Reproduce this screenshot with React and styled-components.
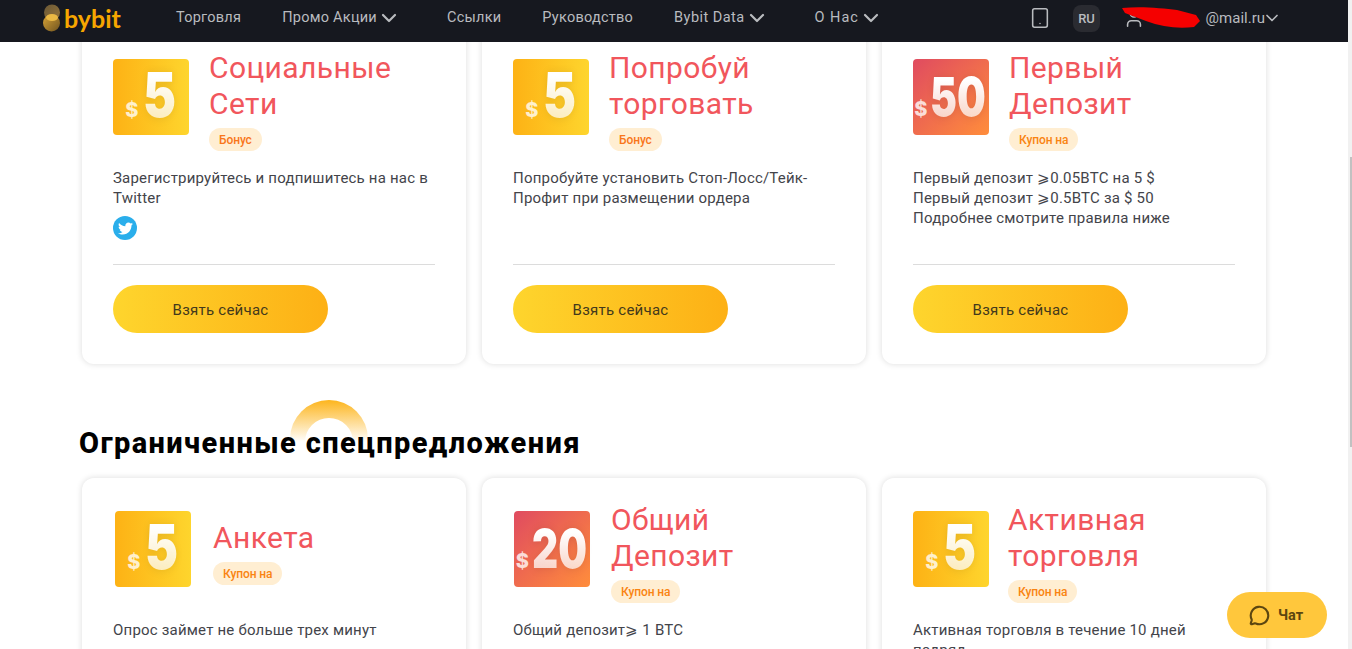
import React from 'react';
import styled, { createGlobalStyle } from 'styled-components';
import { ChevronDown, MessageCircle, Tablet, User } from 'lucide-react';
import { FaTwitter } from 'react-icons/fa';

const YELLOW = 'linear-gradient(90deg, #fdb215 0%, #fed52d 100%)';
const RED = 'linear-gradient(135deg, #e04b60 0%, #ff8d3b 100%)';

const NAV = [
  { label: 'Торговля' },
  { label: 'Промо Акции', menu: true },
  { label: 'Ссылки' },
  { label: 'Руководство' },
  { label: 'Bybit Data', menu: true, track: 0.45 },
  { label: 'О Нас', menu: true, track: 1 },
];

const TOP_CARDS = [
  {
    title: ['Социальные', 'Сети'],
    tag: 'Бонус',
    amount: '5',
    lines: ['Зарегистрируйтесь и подпишитесь на нас в Twitter'],
    twitter: true,
  },
  {
    title: ['Попробуй', 'торговать'],
    tag: 'Бонус',
    amount: '5',
    lines: ['Попробуйте установить Стоп-Лосс/Тейк-Профит при размещении ордера'],
  },
  {
    title: ['Первый', 'Депозит'],
    tag: 'Купон на',
    amount: '50',
    lines: ['Первый депозит ⩾0.05BTC на 5 $', 'Первый депозит ⩾0.5BTC за $ 50', 'Подробнее смотрите правила ниже'],
  },
];

const LIMITED_CARDS = [
  {
    title: ['Анкета'],
    tag: 'Купон на',
    amount: '5',
    shift: 2,
    gap: 22,
    lines: ['Опрос займет не больше трех минут'],
  },
  {
    title: ['Общий', 'Депозит'],
    tag: 'Купон на',
    amount: '20',
    shift: 1,
    gap: 21,
    lines: ['Общий депозит⩾ 1 BTC'],
  },
  {
    title: ['Активная', 'торговля'],
    tag: 'Купон на',
    amount: '5',
    gap: 19,
    lines: ['Активная торговля в течение 10 дней подряд'],
  },
];

function Coupon({ amount }) {
  const wide = amount.length > 1;
  return (
    <CouponIcon $wide={wide}>
      <Dollar>$</Dollar>
      <Amount $wide={wide}>{amount}</Amount>
    </CouponIcon>
  );
}

function RewardCard({ title, tag, amount, lines, twitter, shift = 0, gap = 20 }) {
  return (
    <Card>
      <CardHead $shift={shift} $gap={gap}>
        <Coupon amount={amount} />
        <HeadText>
          <CardTitle>
            {title.map((line) => (
              <div key={line}>{line}</div>
            ))}
          </CardTitle>
          <Tag $strong={tag !== 'Бонус'}>{tag}</Tag>
        </HeadText>
      </CardHead>
      <Description>
        {lines.map((line) => (
          <div key={line}>{line}</div>
        ))}
        {twitter && (
          <TwitterBadge>
            <FaTwitter size={15} color="#fff" />
          </TwitterBadge>
        )}
      </Description>
      <Divider />
      <ClaimButton>Взять сейчас</ClaimButton>
    </Card>
  );
}

export default function App() {
  return (
    <>
      <GlobalStyle />
      <Page>
        <Column>
          <TopBar>
            <Logo>
              <svg width="18" height="28" viewBox="0 0 18 28">
                <defs>
                  <linearGradient id="coinTop" x1="0" y1="0" x2="1" y2="1">
                    <stop offset="0" stopColor="#6b5836" />
                    <stop offset="1" stopColor="#94743a" />
                  </linearGradient>
                  <linearGradient id="coinBottom" x1="0" y1="0" x2="1" y2="1">
                    <stop offset="0" stopColor="#d9a436" />
                    <stop offset="1" stopColor="#6f5320" />
                  </linearGradient>
                </defs>
                <circle cx="9" cy="8.5" r="8" fill="url(#coinTop)" />
                <circle cx="8.5" cy="19" r="8.5" fill="url(#coinBottom)" />
                <ellipse cx="9" cy="13.5" rx="6" ry="3.5" fill="#e9b844" />
              </svg>
              <LogoWord>bybit</LogoWord>
            </Logo>
            <Nav>
              {NAV.map((item) => (
                <NavItem key={item.label} $menu={item.menu} $track={item.track ?? 0.25}>
                  {item.label}
                  {item.menu && <ChevronDown size={24} strokeWidth={2.2} />}
                </NavItem>
              ))}
            </Nav>
            <Tools>
              <Tablet size={22} strokeWidth={1.7} />
              <Lang>RU</Lang>
              <Account>
                <User size={22} strokeWidth={1.7} />
                <Email>@mail.ru</Email>
                <AccountChevron size={20} strokeWidth={2} />
                <Scribble width="80" height="22" viewBox="0 0 80 22">
                  <path
                    d="M0 1 C18 -1 40 1 55 3 L74 8 L78 14 L72 20 C56 22 40 20 24 14 L3 6 Z"
                    fill="#f50000"
                  />
                </Scribble>
              </Account>
            </Tools>
          </TopBar>
          <Content>
            <CardGrid>
              {TOP_CARDS.map((card) => (
                <RewardCard key={card.title[0]} {...card} />
              ))}
            </CardGrid>
            <SectionHeader>
              <Arc />
              <SectionTitle>Ограниченные спецпредложения</SectionTitle>
            </SectionHeader>
            <CardGrid>
              {LIMITED_CARDS.map((card) => (
                <RewardCard key={card.title[0]} {...card} />
              ))}
            </CardGrid>
          </Content>
        </Column>
        <ScrollTrack>
          <ScrollThumb />
        </ScrollTrack>
        <ChatButton>
          <MessageCircle size={21} strokeWidth={2.4} />
          Чат
        </ChatButton>
      </Page>
    </>
  );
}

const GlobalStyle = createGlobalStyle`
  html, body {
    margin: 0;
    height: 100%;
    overflow: hidden;
    background: #fff;
    font-family: Roboto, "Noto Sans", sans-serif;
  }
`;

const Page = styled.div`
  display: flex;
  height: 649px;
  overflow: hidden;
`;

const Column = styled.div`
  position: relative;
  width: 1348px;
  flex: none;
`;

const ScrollTrack = styled.div`
  flex: 1;
  display: flex;
  justify-content: flex-end;
  padding-top: 157px;
  background: #f1f1f1;
`;

const ScrollThumb = styled.div`
  width: 2px;
  height: 290px;
  background: #c1c1c1;
`;

const TopBar = styled.header`
  position: absolute;
  inset: 0 0 auto 0;
  z-index: 5;
  height: 42px;
  box-sizing: border-box;
  display: flex;
  align-items: center;
  padding: 0 70px 6px 43px;
  background: #16181f;
  color: #b9bbbf;
`;

const Logo = styled.div`
  display: flex;
  align-items: center;
  gap: 3px;
  width: 133px;
  flex: none;
`;

const LogoWord = styled.span`
  font-family: Lato, Roboto, sans-serif;
  font-size: 25px;
  font-weight: 700;
  line-height: 30px;
  color: #f7a600;
`;

const Nav = styled.nav`
  display: flex;
  align-items: center;
  gap: 41px;
`;

const NavItem = styled.a`
  display: flex;
  align-items: center;
  gap: 5px;
  font-size: 14.5px;
  line-height: 20px;
  letter-spacing: ${(p) => p.$track}px;
  padding-right: ${(p) => (p.$menu ? '10px' : '0')};

  svg {
    margin: -2px -5px;
  }
`;

const Tools = styled.div`
  display: flex;
  align-items: center;
  margin-left: auto;
`;

const Lang = styled.div`
  width: 27px;
  height: 27px;
  margin: 0 23px 0 22px;
  border-radius: 8px;
  background: #2a2b31;
  display: flex;
  align-items: center;
  justify-content: center;
  font-size: 13px;
  font-weight: 500;
`;

const Account = styled.div`
  position: relative;
  display: flex;
  align-items: center;
  width: 155px;
`;

const Email = styled.span`
  margin-left: auto;
  font-size: 15px;
  line-height: 20px;
`;

const AccountChevron = styled(ChevronDown)`
  margin: 0 -4px 0 -3px;
`;

const Scribble = styled.svg`
  position: absolute;
  left: -1px;
  top: 0;
`;

const Content = styled.main`
  padding: 26px 0 0 82px;
`;

const CardGrid = styled.div`
  display: grid;
  grid-template-columns: repeat(3, 384px);
  gap: 16px;
`;

const Card = styled.article`
  box-sizing: border-box;
  height: 338px;
  padding: 24px 31px 31px;
  background: #fff;
  border-radius: 12px;
  box-shadow: 0 0 6px rgba(0, 0, 0, 0.14);
`;

const CardHead = styled.div`
  display: flex;
  align-items: center;
  min-height: 101px;
  margin-left: ${(p) => p.$shift}px;
  gap: ${(p) => p.$gap}px;
`;

const CouponIcon = styled.div`
  flex: none;
  box-sizing: border-box;
  width: 76px;
  height: 76px;
  margin-bottom: 7px;
  display: flex;
  align-items: baseline;
  justify-content: center;
  gap: ${(p) => (p.$wide ? '3px' : '5px')};
  padding-top: ${(p) => (p.$wide ? '11px' : '5px')};
  border-radius: 4px;
  background: ${(p) => (p.$wide ? RED : YELLOW)};
`;

const Dollar = styled.span`
  font-family: Inter, Roboto, sans-serif;
  font-size: 20px;
  font-weight: 800;
  line-height: 1;
  color: rgba(255, 255, 255, 0.78);
`;

const Amount = styled.span`
  display: inline-block;
  font-family: Inter, Roboto, sans-serif;
  font-size: ${(p) => (p.$wide ? '54px' : '62px')};
  font-weight: 900;
  line-height: 1;
  transform: scaleX(${(p) => (p.$wide ? 0.75 : 0.8)});
  transform-origin: left center;
  margin-right: ${(p) => (p.$wide ? '-17px' : '-8px')};
  background: linear-gradient(180deg, #fff 20%, rgba(255, 255, 255, 0.72) 85%);
  -webkit-background-clip: text;
  background-clip: text;
  color: transparent;
  filter: drop-shadow(0 1px 4px rgba(0, 0, 0, 0.1));
`;

const HeadText = styled.div`
  display: flex;
  flex-direction: column;
  align-items: flex-start;
`;

const CardTitle = styled.h3`
  margin: 0 0 6px;
  font-size: 30px;
  font-weight: 400;
  line-height: 36px;
  letter-spacing: 0.4px;
  color: #f1565c;
`;

const Tag = styled.span`
  height: 23px;
  padding: 0 10px;
  border-radius: 12px;
  background: #ffeed2;
  font-size: 12px;
  font-weight: 500;
  line-height: 24px;
  letter-spacing: -0.1px;
  color: ${(p) => (p.$strong ? '#f98412' : '#f9761a')};
`;

const Description = styled.div`
  height: 96px;
  margin-top: 17px;
  font-size: 15px;
  line-height: 20px;
  letter-spacing: 0.2px;
  color: #43444a;
`;

const TwitterBadge = styled.div`
  width: 24px;
  height: 24px;
  margin-top: 8px;
  border-radius: 50%;
  background: #2aaeeb;
  display: flex;
  align-items: center;
  justify-content: center;
`;

const Divider = styled.hr`
  margin: 0 0 20px;
  border: 0;
  border-top: 1px solid #dcdcdc;
`;

const ClaimButton = styled.button`
  display: block;
  width: 215px;
  height: 48px;
  padding: 1px 0 0;
  border: 0;
  border-radius: 24px;
  background: linear-gradient(90deg, #fed52d 0%, #fdb015 100%);
  font-family: inherit;
  font-size: 15px;
  letter-spacing: 0.25px;
  color: #43391c;
`;

const SectionHeader = styled.div`
  position: relative;
  height: 114px;
  display: flex;
  align-items: flex-end;
  margin-left: -3px;
`;

const Arc = styled.div`
  position: absolute;
  left: 211px;
  top: 36px;
  width: 78px;
  height: 42px;
  border-radius: 39px 39px 0 0;
  overflow: hidden;
  background: linear-gradient(180deg, #fdb51d 0%, #fff 100%);

  &::after {
    content: '';
    position: absolute;
    left: 15px;
    top: 18px;
    width: 48px;
    height: 48px;
    border-radius: 50%;
    background: #fff;
  }
`;

const SectionTitle = styled.h2`
  position: relative;
  margin: 0 0 17px;
  font-size: 29px;
  font-weight: 800;
  line-height: 36px;
  letter-spacing: 1.4px;
  color: #000;
`;

const ChatButton = styled.button`
  position: absolute;
  left: 1227px;
  top: 592px;
  z-index: 6;
  width: 100px;
  height: 46px;
  display: flex;
  align-items: center;
  justify-content: center;
  gap: 8px;
  padding: 0 2px 0 0;
  border: 0;
  border-radius: 23px;
  background: #ffc73c;
  font-family: inherit;
  font-size: 14.5px;
  font-weight: 700;
  color: #5c4610;
`;
